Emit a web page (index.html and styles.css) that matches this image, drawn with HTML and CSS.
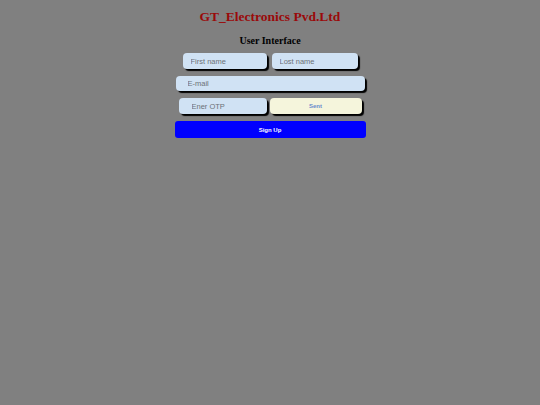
FILE: index.html
```html
<!DOCTYPE html>
<html>
<head>
<meta charset="utf-8">
<link rel="stylesheet" href="styles.css">
</head>
<body>
<h1 class="brand">GT_Electronics Pvd.Ltd</h1>
<h2 class="subtitle">User Interface</h2>
<form class="form">
  <div class="row row-names">
    <input class="field field-first" type="text" placeholder="First name">
    <input class="field field-last" type="text" placeholder="Lost name">
  </div>
  <div class="row">
    <input class="field field-email" type="text" placeholder="E-mail">
  </div>
  <div class="row row-otp">
    <input class="field field-otp" type="text" placeholder="Ener OTP">
    <button class="btn-sent" type="button">Sent</button>
  </div>
  <button class="btn-signup" type="button">Sign Up</button>
</form>
</body>
</html>
```
FILE: styles.css
```css
html, body {
  margin: 0;
  padding: 0;
  background: #808080;
}
body {
  width: 540px;
  height: 405px;
  font-family: "Liberation Sans", Arial, sans-serif;
}
.brand {
  margin: 0;
  padding-top: 9px;
  text-align: center;
  font-family: "Liberation Serif", "Times New Roman", serif;
  font-size: 13.5px;
  line-height: 16px;
  font-weight: bold;
  color: #9a0a0a;
}
.subtitle {
  margin: 0;
  padding-top: 10px;
  text-align: center;
  font-family: "Liberation Serif", "Times New Roman", serif;
  font-size: 10px;
  line-height: 12px;
  font-weight: bold;
  color: #000;
}
.form {
  width: 191px;
  margin: 6px auto 0;
  display: flex;
  flex-direction: column;
}
.row {
  display: flex;
}
.field {
  box-sizing: border-box;
  height: 16px;
  border: none;
  border-radius: 4px;
  background: #d0e2f4;
  box-shadow: 2px 2px 1px #000;
  font-family: "Liberation Sans", Arial, sans-serif;
  font-size: 7.5px;
  padding: 0 0 0 8px;
  outline: none;
}
.field::placeholder {
  color: #6c7176;
}
.row-names {
  padding-left: 8px;
  gap: 5px;
}
.field-first { width: 84px; }
.field-last { width: 86px; }
.row-names + .row {
  margin-top: 7px;
  padding-left: 1px;
}
.field-email {
  width: 189px;
  height: 15px;
  padding-left: 12px;
  font-size: 7.5px;
}
.row-otp {
  margin-top: 7px;
  padding-left: 4px;
  gap: 3px;
}
.field-otp {
  width: 88px;
  padding-left: 13px;
  font-size: 7.5px;
}
.btn-sent {
  box-sizing: border-box;
  width: 92px;
  height: 16px;
  border: none;
  border-radius: 4px;
  background: #f5f5dc;
  box-shadow: 2px 2px 1px #000;
  color: #6a8ccc;
  font-family: "Liberation Sans", Arial, sans-serif;
  font-size: 6px;
  font-weight: bold;
  padding: 0;
}
.btn-signup {
  box-sizing: border-box;
  margin-top: 7px;
  width: 191px;
  height: 17px;
  border: none;
  border-radius: 3px;
  background: #0000ff;
  color: #fff;
  font-family: "Liberation Sans", Arial, sans-serif;
  font-size: 6px;
  font-weight: bold;
  padding: 0;
}
```
